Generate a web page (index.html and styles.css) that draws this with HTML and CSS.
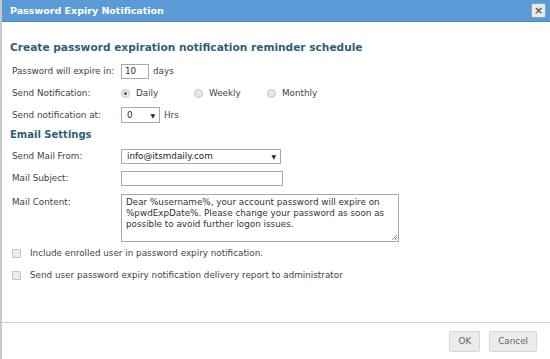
FILE: index.html
```html
<!DOCTYPE html>
<html lang="en">
<head>
    <meta charset="UTF-8">
    <title>Password Expiry Notification</title>
    <link rel="stylesheet" href="styles.css">
</head>
<body>
    <div class="dialog">
        <div class="dialog-header">
            <span class="dialog-title">Password Expiry Notification</span>
            <button class="close-btn">&#215;</button>
        </div>

        <div class="dialog-body">
            <h2 class="section-title">Create password expiration notification reminder schedule</h2>

            <div class="form-row">
                <label class="field-label">Password will expire in:</label>
                <div class="field">
                    <input class="text-input days-input" type="text" value="10">
                    <span>days</span>
                </div>
            </div>

            <div class="form-row">
                <label class="field-label">Send Notification:</label>
                <div class="field radio-group">
                    <span class="radio-item"><span class="radio checked"></span>Daily</span>
                    <span class="radio-item"><span class="radio"></span>Weekly</span>
                    <span class="radio-item"><span class="radio"></span>Monthly</span>
                </div>
            </div>

            <div class="form-row">
                <label class="field-label">Send notification at:</label>
                <div class="field">
                    <span class="select hrs-select">0<span class="caret">&#9660;</span></span>
                    <span>Hrs</span>
                </div>
            </div>

            <h3 class="sub-title">Email Settings</h3>

            <div class="form-row">
                <label class="field-label">Send Mail From:</label>
                <div class="field">
                    <span class="select mail-select">info@itsmdaily.com<span class="caret">&#9660;</span></span>
                </div>
            </div>

            <div class="form-row">
                <label class="field-label">Mail Subject:</label>
                <div class="field">
                    <input class="text-input subject-input" type="text" value="">
                </div>
            </div>

            <div class="form-row top">
                <label class="field-label">Mail Content:</label>
                <div class="field">
                    <div class="textarea">Dear %username%, your account password will expire on %pwdExpDate%. Please change your password as soon as possible to avoid further logon issues.<span class="grip"></span></div>
                </div>
            </div>

            <div class="check-row"><span class="checkbox"></span>Include enrolled user in password expiry notification.</div>
            <div class="check-row"><span class="checkbox"></span>Send user password expiry notification delivery report to administrator</div>
        </div>

        <div class="dialog-footer">
            <button class="btn">OK</button>
            <button class="btn">Cancel</button>
        </div>
    </div>
</body>
</html>
```

FILE: styles.css
```css
body {
    margin: 0;
    background: #ffffff;
    font-family: "DejaVu Sans", Verdana, sans-serif;
    font-size: 8.8px;
    color: #444444;
}
.dialog {
    width: 550px;
    height: 359px;
    box-sizing: border-box;
    border-left: 2px solid #c8c8c8;
    display: flex;
    flex-direction: column;
}
.dialog-header {
    height: 21px;
    background: #5b9bd5;
    border-bottom: 1px solid #4a86be;
    display: flex;
    align-items: center;
    justify-content: space-between;
    padding: 0 4px 0 8px;
}
.dialog-title {
    color: #ffffff;
    font-weight: bold;
    font-size: 9.5px;
}
.close-btn {
    width: 15px;
    height: 15px;
    padding: 0;
    border: 1px solid #8aa4c0;
    border-radius: 2px;
    background: #e9e9e9;
    color: #555555;
    font-size: 11px;
    line-height: 12px;
    font-weight: bold;
    font-family: "DejaVu Sans", sans-serif;
}
.dialog-body {
    flex: 1;
    padding: 19px 10px 0 8px;
}
.section-title {
    margin: 0 0 10px 0;
    font-size: 10.6px;
    font-weight: bold;
    color: #2f5f76;
}
.form-row {
    display: flex;
    align-items: center;
    min-height: 16px;
    margin-bottom: 6px;
    padding-left: 2px;
}
.form-row.top {
    align-items: flex-start;
    margin-top: 8px;
}
.form-row.top .field-label {
    padding-top: 3px;
}
.field-label {
    width: 109px;
    flex-shrink: 0;
}
.field {
    display: flex;
    align-items: center;
    gap: 4px;
}
.text-input {
    box-sizing: border-box;
    height: 15px;
    border: 1px solid #a9a9a9;
    font-family: inherit;
    font-size: 8.8px;
    color: #333333;
    padding: 0 3px;
    margin: 0;
}
.days-input { width: 28px; }
.subject-input { width: 162px; }
.radio-group { gap: 0; }
.radio-item {
    display: inline-flex;
    align-items: center;
    width: 73px;
}
.radio {
    width: 9px;
    height: 9px;
    border-radius: 50%;
    border: 1px solid #c4c4c4;
    background: #e8e8e8;
    margin-right: 6px;
    box-sizing: border-box;
    position: relative;
}
.radio.checked::after {
    content: "";
    position: absolute;
    left: 2px;
    top: 2px;
    width: 3px;
    height: 3px;
    border-radius: 50%;
    background: #555555;
}
.select {
    box-sizing: border-box;
    height: 16px;
    border: 1px solid #a9a9a9;
    display: inline-flex;
    align-items: center;
    justify-content: space-between;
    padding: 0 4px 0 5px;
    color: #222222;
}
.hrs-select { width: 39px; }
.mail-select { width: 160px; height: 15px; }
.caret {
    font-size: 6px;
    color: #222222;
}
.sub-title {
    margin: 1px 0 8px 0;
    font-size: 10px;
    font-weight: bold;
    color: #2f5f76;
}
.textarea {
    position: relative;
    box-sizing: border-box;
    width: 278px;
    height: 48px;
    border: 1px solid #a9a9a9;
    padding: 2px 4px;
    line-height: 11px;
    color: #333333;
}
.grip {
    position: absolute;
    right: 1px;
    bottom: 1px;
    width: 5px;
    height: 5px;
    background: linear-gradient(135deg, transparent 45%, #999999 45%, #999999 55%, transparent 55%, transparent 70%, #999999 70%, #999999 80%, transparent 80%);
}
.check-row {
    display: flex;
    align-items: center;
    margin: 2px 0 12px 2px;
}
.checkbox {
    width: 9px;
    height: 9px;
    box-sizing: border-box;
    border: 1px solid #c4c4c4;
    background: #ececec;
    border-radius: 1px;
    margin-right: 9px;
}
.dialog-footer {
    border-top: 1px solid #cfcfcf;
    height: 36px;
    display: flex;
    align-items: center;
    justify-content: flex-end;
    gap: 9px;
    padding-right: 13px;
}
.btn {
    height: 21px;
    padding: 0 8px;
    border: 1px solid #d6d6d6;
    border-radius: 2px;
    background: #ececec;
    color: #666666;
    font-family: "DejaVu Sans", sans-serif;
    font-size: 8.8px;
}
```
